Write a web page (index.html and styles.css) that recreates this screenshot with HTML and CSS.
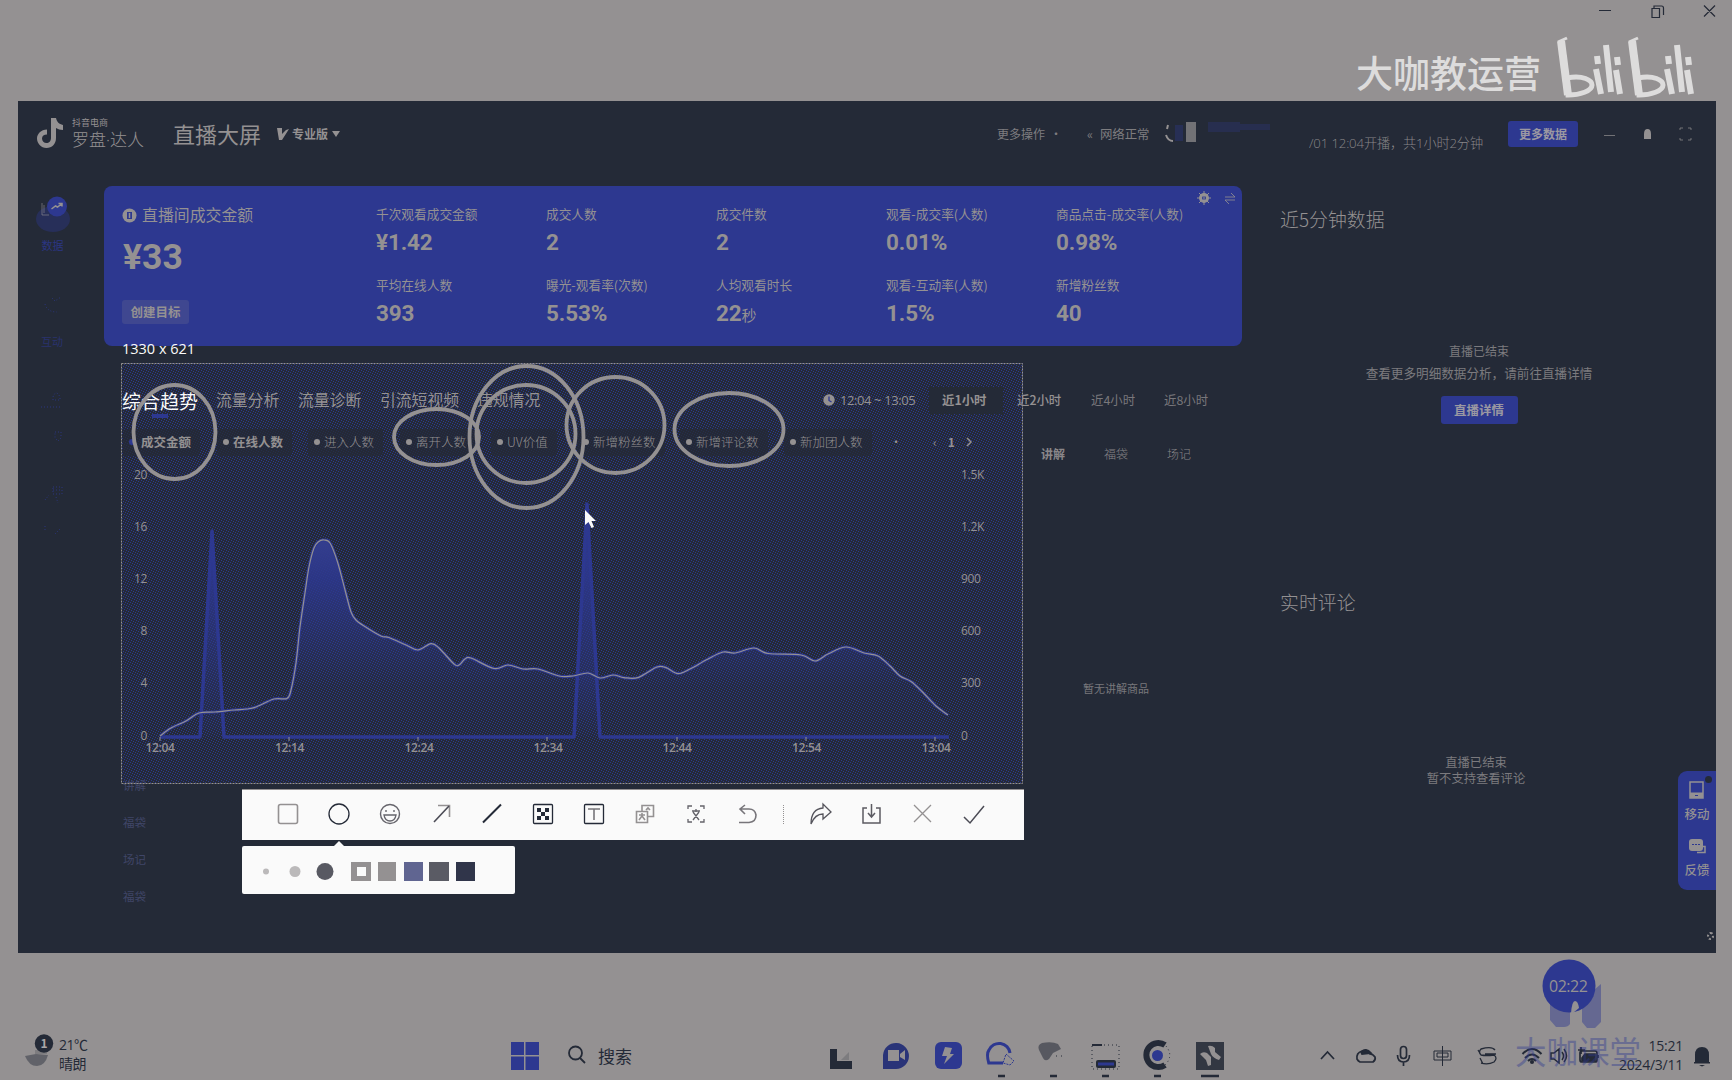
FILE: index.html
```html
<!DOCTYPE html>
<html lang="zh-CN">
<head>
<meta charset="utf-8">
<title>直播大屏</title>
<link rel="stylesheet" href="styles.css">
</head>
<body>
<div class="desktop">
  <header class="titlebar">
    <svg class="winctl" width="118" height="14" viewBox="0 0 118 14" fill="none" stroke="#242a37" stroke-width="1.2">
      <path d="M0 6.500h12M53 4.500h7.500v9H53zM55 4.500V2h7.500a2 2 0 0 1 2 2v7M105 1.500l11 11M116 1.500l-11 11"/>
    </svg>
    <div class="brandmark">
      <span>大咖教运营</span>
      <svg width="141" height="62" viewBox="0 0 141 62" fill="none" stroke="#dddcdc">
        <g id="bili">
          <path d="M5 4l7 54" stroke-width="8"/><path d="M2 5L11 1" stroke-width="3"/>
          <path d="M11 41c16-3 25 2 25 7 0 6-12 10-24 10z" stroke-width="5"/>
          <path d="M40 32l5 25M50 8l5 47M60 33l4 24" stroke-width="6"/>
          <path d="M41 19l1 8M61 20l1 8" stroke-width="6"/>
        </g>
        <use href="#bili" x="71"/>
      </svg>
    </div>
  </header>

  <section class="window">
    <div class="topbar">
      <svg class="note" width="26" height="30" viewBox="0 0 26 30"><path d="M14 0h5c1 4 3 6 7 7v5c-3 0-5-1-7-2v10c0 6-4 10-9.500 10S0 25 0 20.500 4 11.500 10 11.500v5c-3 0-5 1.500-5 4s2 4.500 4.500 4.500S14 23 14 20z" fill="#949192"/></svg>
      <div class="product"><small>抖音电商</small><b>罗盘<i>·</i>达人</b></div>
      <h1>直播大屏</h1>
      <div class="edition"><svg width="12" height="12" viewBox="0 0 12 12" fill="#949192"><path d="M0 0h5v6l4-4 3-1-7 11H2z"/></svg><span>专业版</span><svg width="8" height="6" viewBox="0 0 8 6" fill="#949192"><path d="M0 0h8L4 6z"/></svg></div>
      <div class="more">更多操作<i>·</i></div>
      <div class="net"><i>«</i>网络正常</div>
      <svg class="avatar" width="108" height="22" viewBox="0 0 108 22"><path d="M3 4l-1 4M1 14q2 6 7 6" stroke="#949192" stroke-width="2" fill="none"/><path d="M10 4h8v16h-8z" fill="#2d3890" opacity=".35"/><path d="M21 1h10v20H21z" fill="#949192" opacity=".7"/><path d="M43 1h32v10H43zM75 3h30v6H75z" fill="#2d3890" opacity=".28"/></svg>
      <div class="session">/01 12:04开播，共1小时2分钟</div>
      <div class="btn btn-data">更多数据</div>
      <svg class="topicons" width="90" height="16" viewBox="0 0 90 16" fill="none" stroke="#949192"><path d="M0 9.500h11" opacity=".7"/><path d="M40 13V8q0-5 3.500-5T47 8v5z" fill="#949192" stroke="none"/><path d="M76 4V2h3M84 2h3v2M76 12v2h3M84 14h3v-2" opacity=".7"/></svg>
    </div>

    <div class="workspace">
      <nav class="rail">
        <svg width="86" height="360" viewBox="18 186 86 360" fill="none">
          <ellipse cx="53" cy="219" rx="17" ry="13" fill="#2d3890" opacity=".38"/>
          <path d="M42 203v12h7M44 205v8" stroke="#949192" opacity=".6"/>
          <circle cx="57" cy="206.500" r="10" fill="#2d3890"/>
          <path d="M51.500 209l4-3 2 1 4-3M58.500 203.500h3.500v3" stroke="#949192" stroke-width="1.500"/>
          <g fill="#2d3890" font-size="11"><text x="41.500" y="250" opacity=".85">数据</text><text x="41" y="346" opacity=".6">互动</text></g>
          <g stroke="#2d3890" opacity=".8" stroke-dasharray="1 2"><path d="M52 298l3 3 6-4M45 304q2 8 12 8M53 400v-3q3-8 7 0v3zM41 407h20M55 432h6v6l-3 3-3-3zM53 487h9v7h-9zM53 490h9M45 500l4-5M56 497l2 6M45 526v4M60 529l-5 5"/></g>
        </svg>
      </nav>

      <main>
        <section class="kpi">
          <div class="gmv">
            <div class="gmv-title"><svg width="15" height="15" viewBox="0 0 15 15"><circle cx="7.500" cy="7.500" r="7" fill="#949192"/><path d="M5 4h5v7H5z" fill="#2d3890"/><path d="M7.500 5v5" stroke="#949192" stroke-width="1.500"/></svg>直播间成交金额</div>
            <div class="gmv-value">¥33</div>
            <div class="goal">创建目标</div>
          </div>
          <dl class="metrics">
            <div><dt>千次观看成交金额</dt><dd>¥1.42</dd></div>
            <div><dt>成交人数</dt><dd>2</dd></div>
            <div><dt>成交件数</dt><dd>2</dd></div>
            <div><dt>观看-成交率(人数)</dt><dd>0.01%</dd></div>
            <div><dt>商品点击-成交率(人数)</dt><dd>0.98%</dd></div>
            <div><dt>平均在线人数</dt><dd>393</dd></div>
            <div><dt>曝光-观看率(次数)</dt><dd>5.53%</dd></div>
            <div><dt>人均观看时长</dt><dd>22<small>秒</small></dd></div>
            <div><dt>观看-互动率(人数)</dt><dd>1.5%</dd></div>
            <div><dt>新增粉丝数</dt><dd>40</dd></div>
          </dl>
          <svg class="kpi-tools" width="38" height="16" viewBox="0 0 38 16" fill="none" stroke="#949192"><circle cx="6" cy="7" r="3.500" stroke-width="3"/><path d="M6 0v14M-1 7h3M10 7h3M1 2l2 2M9 10l2 2M11 2l-2 2M3 10l-2 2"/><path d="M27 6h10l-4-4M37 9H27l4 4" opacity=".8"/></svg>
        </section>

        <div class="lower">
          <section class="trend">
            <div class="tabs">
              <b class="on">综合趋势</b><b>流量分析</b><b>流量诊断</b><b>引流短视频</b><b>违规情况</b>
              <span class="clock"><svg width="12" height="12" viewBox="0 0 12 12"><circle cx="6" cy="6" r="5.700" fill="#949192"/><path d="M6 2.500V6.500l2.500 1.500" stroke="#2d3890" fill="none" stroke-width="1.300"/></svg>12:04 ~ 13:05</span>
              <span class="range cur">近1小时</span><span class="range">近2小时</span><span class="range dim">近4小时</span><span class="range dim">近8小时</span>
            </div>
            <div class="legend">
              <span class="pill first">成交金额</span><span class="pill strong">在线人数</span><span class="pill">进入人数</span><span class="pill">离开人数</span><span class="pill">UV价值</span><span class="pill">新增粉丝数</span><span class="pill">新增评论数</span><span class="pill">新加团人数</span>
              <span class="pager"><i>·</i><i>‹</i><b>1</b><svg width="7" height="10" viewBox="0 0 7 10"><path d="M1 1l4 4-4 4" fill="none" stroke="#949192" stroke-width="1.500"/></svg></span>
            </div>
            <svg class="chart" width="901" height="320" viewBox="122 463 901 320">
              <defs>
                <linearGradient id="audience" x1="0" y1="540" x2="0" y2="737" gradientUnits="userSpaceOnUse"><stop offset="0" stop-color="#343e8e"/><stop offset=".2" stop-color="#2d3890" stop-opacity=".85"/><stop offset=".5" stop-color="#2d3890" stop-opacity=".42"/><stop offset=".75" stop-color="#2d3890" stop-opacity=".08"/><stop offset="1" stop-color="#2d3890" stop-opacity="0"/></linearGradient>
                <linearGradient id="sales" x1="0" y1="505" x2="0" y2="737" gradientUnits="userSpaceOnUse"><stop offset="0" stop-color="#2d3890"/><stop offset=".3" stop-color="#2d3890" stop-opacity=".9"/><stop offset="1" stop-color="#2d3890" stop-opacity=".05"/></linearGradient>
              </defs>
              <path id="fill" fill="url(#audience)"/>
              <path d="M160 737H200L212 531L224 737H574L587 504L600 737H949" fill="url(#sales)" stroke="#2d3890" stroke-width="3.500" stroke-linejoin="round"/>
              <path id="halo" fill="none" stroke="#2d3890" stroke-width="3"/>
              <path id="line" fill="none" stroke="#949192" stroke-width="1.200"/>
              <path d="M160 737v4M289 737v4M418 737v4M547 737v4M677 737v4M806 737v4M935 737v4" stroke="#949192"/>
              <g class="axis" text-anchor="end"><text x="147" y="479">20</text><text x="147" y="531">16</text><text x="147" y="583">12</text><text x="147" y="635">8</text><text x="147" y="687">4</text><text x="147" y="740">0</text></g>
              <g class="axis"><text x="961" y="479">1.5K</text><text x="961" y="531">1.2K</text><text x="961" y="583">900</text><text x="961" y="635">600</text><text x="961" y="687">300</text><text x="961" y="740">0</text></g>
              <g class="axis time" text-anchor="middle"><text x="160" y="752">12:04</text><text x="289.500" y="752">12:14</text><text x="419" y="752">12:24</text><text x="548" y="752">12:34</text><text x="677" y="752">12:44</text><text x="806.500" y="752">12:54</text><text x="936" y="752">13:04</text></g>
            </svg>
          </section>
          <aside class="talk">
            <div class="talk-tabs"><b>讲解</b><span>福袋</span><span>场记</span></div>
            <p>暂无讲解商品</p>
          </aside>
        </div>
        <ul class="events"><li>讲解</li><li>福袋</li><li>场记</li><li>福袋</li></ul>
      </main>

      <aside class="side">
        <h2>近5分钟数据</h2>
        <div class="ended"><p>直播已结束</p><p class="hint">查看更多明细数据分析，请前往直播详情</p><div class="btn btn-detail">直播详情</div></div>
        <h2 class="comments-title">实时评论</h2>
        <div class="muted"><p>直播已结束</p><p>暂不支持查看评论</p></div>
      </aside>
    </div>
  </section>

  <footer class="taskbar">
    <div class="weather">
      <svg width="32" height="36" viewBox="0 0 32 36"><path d="M2 22l11-2 12 1q-3 11-11 11T2 22z" fill="#242a37" opacity=".45"/><path d="M12 16h12v4H12z" fill="#242a37" opacity=".2"/><circle cx="21" cy="9.500" r="9.200" fill="#242a37"/><text x="21" y="14" text-anchor="middle" font-size="12" font-weight="700" fill="#aaa7a8">1</text></svg>
      <div><span>21℃</span><span>晴朗</span></div>
    </div>
    <svg class="start" width="28" height="28" viewBox="0 0 28 28" fill="#2d3890"><path d="M0 0h13v13H0zM14.500 0H28v13H14.500zM0 14.500h13V28H0zM14.500 14.500H28V28H14.500z"/></svg>
    <div class="search"><svg width="18" height="20" viewBox="0 0 18 20" fill="none" stroke="#242a37" stroke-width="1.800"><circle cx="7.500" cy="8" r="6.500"/><path d="M12 13l5 5"/></svg>搜索</div>
    <svg class="apps" width="400" height="40" viewBox="830 1038 400 40">
      <path d="M830 1049h7v12h15v8h-22z" fill="#242a37"/><path d="M841 1060l8-8v8z" fill="#242a37" opacity=".2"/>
      <path d="M883 1069v-14a13 13 0 1 1 13 14z" fill="#2a3478"/><path d="M888 1050h11v11h-11zM900 1054l5-4v10l-5-3z" fill="#949192"/>
      <rect x="935" y="1042" width="27" height="27" rx="6" fill="#2d3890"/><path d="M945 1047l7 1-2 6h4l-10 10 3-8h-5z" fill="#949192"/>
      <path d="M989 1064q-3-10 0-14a11 11 0 0 1 21 3M988 1063h15" fill="none" stroke="#2d3890" stroke-width="3"/><path d="M1006 1054l8 7-4 4-7-2z" fill="none" stroke="#2d3890" stroke-dasharray="2 1"/>
      <path d="M1039 1050q-2-5 3-7 10-2 16 1l3 5-8 4-4 6q-4 3-6-1z" fill="#242a37" opacity=".55"/><path d="M1056 1056h6" stroke="#242a37" stroke-dasharray="1 4"/>
      <path d="M1092 1045h27v24h-27z" fill="none" stroke="#242a37" stroke-dasharray="1 3"/><path d="M1092 1045h10" stroke="#242a37" stroke-width="2"/><rect x="1096" y="1060" width="20" height="8" rx="2" fill="#242a37"/><path d="M1098 1064h16" stroke="#2d3890" stroke-width="3"/>
      <path d="M1165 1045a12 12 0 1 0 0 20" fill="none" stroke="#242a37" stroke-width="6"/><path d="M1166 1046q8 10-1 19" fill="none" stroke="#242a37" stroke-dasharray="1 3"/><circle cx="1157.500" cy="1055.500" r="5.500" fill="#2d3890"/>
      <rect x="1196" y="1042" width="28" height="28" fill="#242a37" opacity=".88"/><path d="M1200 1054q3-3 7-1l4 4v8l-3 1-2-6zM1208 1046q4-1 7 2v4l6 5-2 3q-6-2-8-6z" fill="#949192"/>
      <path d="M998 1076h7M1050 1076h7M1102 1076h7M1154 1076h7M1201 1076h18" stroke="#242a37" stroke-width="2.500"/>
    </svg>
    <svg class="tray" width="282" height="24" viewBox="1320 1044 282 24" fill="none" stroke="#242a37" stroke-width="1.700">
      <path d="M1321 1059l6.500-7 6.500 7"/>
      <path d="M1360 1062h13q3-2 2-5-2-3-5-3-3-5-8-3-6 2-5 8 1 2 3 3z"/><path d="M1361 1052q5-5 10 1l-9 1z" fill="#242a37"/>
      <rect x="1400.500" y="1046.500" width="6" height="12" rx="3"/><path d="M1397.500 1055q0 7 6 7t6-7M1403.500 1062v4"/>
      <path d="M1434 1051h17v9h-17zM1442.500 1046v20M1437 1053h11v4h-11z" stroke-width="1"/>
      <path d="M1495 1050q-3-4-14-1-3 3 0 6 5 1 13 0 4 3 0 7-6 3-13 1M1485 1054h11M1480 1058l3 6M1478 1050l3 5" stroke-width="1.300"/>
      <path d="M1522.500 1054q9.500-10 19 0M1525 1058q7-7 14 0M1528 1061q4-4 8 0" stroke-width="2"/><circle cx="1532" cy="1062" r="1.200" fill="#242a37"/>
      <path d="M1551 1053h3l5-4v14l-5-4h-3zM1562 1052q3 4 0 8M1564 1049q5 7 0 13" stroke-width="1.500"/>
      <rect x="1580" y="1051" width="17" height="11" rx="2"/><path d="M1582 1061v-3l3-4h10v7zM1581 1047v7M1578 1050h7M1598 1055v3" fill="#242a37"/>
    </svg>
    <div class="clocktime"><span>15:21</span><span>2024/3/11</span></div>
    <svg class="bell" width="16" height="20" viewBox="0 0 16 20" fill="#242a37"><path d="M1 16V8q0-8 7-8t7 8v8zM0 15h16v1.500H0zM5 18h6l-3 1.500z"/></svg>
  </footer>

  <svg class="marks" width="1732" height="1080" viewBox="0 0 1732 1080" fill="none" stroke="#949192" stroke-width="3.800">
    <ellipse cx="174.500" cy="432" rx="41" ry="47"/><ellipse cx="436.500" cy="437" rx="42.500" ry="28"/><ellipse cx="526.500" cy="437" rx="57" ry="71"/><ellipse cx="526" cy="434" rx="49.500" ry="49"/><ellipse cx="615.500" cy="425" rx="49" ry="48"/><ellipse cx="729" cy="429.500" rx="54.500" ry="36.500"/>
    <rect x="121.500" y="363.500" width="901" height="420" stroke-width="1" stroke-dasharray="2 1"/>
    <path d="M585 510v15l3.500-3 3 6 2.500-1-2.500-6h4.500z" fill="#fafafa" stroke="none"/>
  </svg>
  <div class="size-tip">1330 x 621</div>

  <div class="shot-tools">
    <svg width="782" height="51" viewBox="242 789 782 51" fill="none" stroke="#949192" stroke-width="1.600">
      <rect x="278.500" y="804.500" width="19" height="19" rx="2"/>
      <circle cx="339" cy="814" r="10" stroke="#242a37" stroke-width="1.300"/>
      <g stroke="#66656c" stroke-width="1.400"><circle cx="390" cy="814" r="9.500"/><path d="M384 815h12q-1 6-6 6t-6-6zM386 810v2M394 810v2"/></g>
      <path d="M438 805.500h11.500V817"/><path d="M434 822l15-16" stroke="#4b4b55"/>
      <path d="M483 822.500l18-18" stroke="#242a37" stroke-width="2"/>
      <rect x="533.500" y="804.500" width="19" height="19" rx="1" stroke="#242a37" stroke-width="1.300"/><path d="M537 808h4v4h-4zM545 808h4v4h-4zM541 812h4v4h-4zM537 816h4v4h-4zM545 816h4v4h-4z" fill="#242a37" stroke="none"/>
      <rect x="584.500" y="804.500" width="19" height="19" rx="1" stroke="#242a37" stroke-width="1.300"/><path d="M588 809h12M594 809v11" stroke="#77757a"/>
      <path d="M642 811v-5.500h11.500v11H648M636.500 811.500h11v11h-11zM639 815h6M642 813v3l-3 4M642 816l3 4M646 810l2-2 2 2"/>
      <path d="M688 809v-3h4M700 806h4v3M688 819v3h4M700 822h4v-3M692 811h8M696 809v3M693 820l6-8M693 812l6 8" stroke="#64636a" stroke-width="1.300"/>
      <path d="M745 805l-5 4 5 5M740 809h9q6 0 7 6 0 7-7 7.500h-10" stroke="#77757a"/>
      <path d="M783.500 805v19" stroke-dasharray="1 1" stroke-width="1"/>
      <path d="M811 824q0-15 12-16v-4l8 8-8 7v-5q-8 0-12 10z" stroke="#55545c" stroke-width="1.300"/>
      <path d="M867 808h-4v15h17v-15h-4M871.500 804v13M868 813l3.500 4 3.500-4" stroke="#5c5b62" stroke-width="1.500"/>
      <path d="M914 805l17 17M931 805l-17 17" stroke-width="1.300"/>
      <path d="M964 817l6 6 14-17" stroke="#4b4b55" stroke-width="1.500"/>
    </svg>
  </div>
  <div class="shot-palette">
    <svg width="273" height="53" viewBox="242 841 273 53"><path d="M333 847l6-6 6 6z" fill="#fafafa"/><circle cx="266" cy="871.500" r="3" fill="#bbb9ba"/><circle cx="295" cy="871.500" r="5.500" fill="#bbb9ba"/><circle cx="325" cy="871.500" r="8.500" fill="#585962"/><path d="M351 862h20v19h-20z" fill="#949192"/><path d="M357 867h9v9h-9z" fill="#fafafa"/><path d="M378 862h18v19h-18z" fill="#949192"/><path d="M404 862h19v19h-19z" fill="#606591"/><path d="M429 862h20v19h-20z" fill="#5a5b64"/><path d="M456 862h19v19h-19z" fill="#30354a"/></svg>
  </div>

  <div class="float-menu">
    <svg width="20" height="19" viewBox="0 0 20 19"><path d="M3 1h13v16H3z" fill="none" stroke="#949192" stroke-width="1.500"/><path d="M3 11.500h13V17H3z" fill="#949192"/><path d="M8 14.500h3" stroke="#2d3890"/></svg>
    <span>移动</span>
    <svg width="20" height="17" viewBox="0 0 20 17"><rect x="2" y="0" width="14" height="12" rx="3" fill="#949192"/><path d="M5 5.500h8" stroke="#2d3890" stroke-dasharray="2 1"/><path d="M16 7.500h2v6H10" fill="none" stroke="#949192" stroke-width="1.500"/></svg>
    <span>反馈</span>
    <i class="close-dot"></i>
  </div>
  <i class="corner-dot"></i>
  <div class="watermark">大咖课堂</div>
  <div class="mascot"><svg width="60" height="70" viewBox="1542 959 60 70"><path d="M1550 1000h20v24q-2 3-6 3h-8l-6-7zM1582 1000l19-16v38l-6 6h-8l-5-6z" fill="#2d3890" opacity=".45"/><circle cx="1569" cy="986" r="26.500" fill="#2d3890"/><path d="M1571 1013q1-12 4-12t4 7l-6 5z" fill="#949192"/></svg><span>02:22</span></div>
</div>
<script src="chart.js"></script>
</body>
</html>
```
FILE: chart.js
```js
// Online-audience samples, in chart coordinates.
const pts = [[160,736],[171,728],[186,721],[199,713],[215,712],[234,710],[247,709],[256,707],[274,699],[287,698.5],[291,690],[296,663],[300,627],[305,593],[309,567],[314,548],[318.5,541.7],[324,540],[330,543],[337.5,562],[345,590],[351,612],[356,620],[364,626],[381,636],[389,637.5],[406,645],[418,650],[431,643.7],[439,648],[454,664],[459,665],[465,659],[471,658],[494,668.5],[508,665],[523,669],[538,669],[559,676],[573,676],[588,673],[600,678],[613,675],[624,677.6],[638,677.6],[657,667],[666,667.6],[678,673.6],[690,669],[707,659.5],[723,652],[735,653],[754,648],[768,653.5],[801,655],[815,661],[828,654],[846,647],[864,653],[878,656],[890,666],[900,676],[911,681.5],[922,691.5],[936,706],[948,715]];
let d = `M${pts[0]}`;
for (let i = 0; i < pts.length - 1; i++) {
  const p = pts[Math.max(i - 1, 0)], a = pts[i], b = pts[i + 1], n = pts[Math.min(i + 2, pts.length - 1)];
  d += `C${a[0] + (b[0] - p[0]) / 6},${a[1] + (b[1] - p[1]) / 6} ${b[0] - (n[0] - a[0]) / 6},${b[1] - (n[1] - a[1]) / 6} ${b[0]},${b[1]}`;
}
document.getElementById('line').setAttribute('d', d);
document.getElementById('halo').setAttribute('d', d);
document.getElementById('fill').setAttribute('d', d + 'V737H160Z');
```
FILE: styles.css
```css
:root {
  --gray: #949192;
  --ink: #242a37;
  --blue: #2d3890;
  --cjk: "Noto Sans CJK SC", sans-serif;
}
* { box-sizing: border-box; margin: 0; padding: 0; }
body { background: var(--gray); font: 12px/1 var(--cjk); color: var(--gray); overflow: hidden; }
i { font-style: normal; }
svg { display: block; flex: none; overflow: visible; }
.desktop { position: relative; width: 1732px; height: 1080px; display: flex; flex-direction: column; white-space: nowrap; }

.titlebar { height: 101px; display: flex; flex-direction: column; align-items: flex-end; padding: 4px 15px 0 0; }
.brandmark { display: flex; align-items: center; gap: 15px; margin: 19px 20px 0 0; color: #dddcdc; font-size: 37px; font-weight: 500; }
.brandmark span { padding-top: 8px; }

.window { width: 1698px; height: 852px; margin-left: 18px; background: var(--ink); }
.topbar { height: 85px; display: flex; align-items: flex-start; padding-left: 19px; }
.note { margin-top: 17px; width: 26px; }
.product { margin: 16px 0 0 9px; width: 101px; display: flex; flex-direction: column; }
.product small { font-size: 9px; line-height: 11px; }
.product b { font-size: 17px; font-weight: 300; line-height: 20px; margin-top: 1px; }
.product i { font-family: "Open Sans", sans-serif; }
.topbar h1 { font-size: 22px; font-weight: 400; line-height: 34px; margin-top: 15px; width: 104px; }
.edition { display: flex; align-items: center; gap: 4px; height: 34px; margin-top: 16px; width: 720px; font-weight: 700; }
.edition span { margin-left: -1px; }
.more, .net { line-height: 34px; margin-top: 16px; opacity: .8; }
.more { width: 90px; }
.more i { margin-left: 5px; }
.net { width: 78px; font-size: 12.400px; }
.net i { margin-right: 7px; }
.avatar { margin-top: 20px; width: 108px; }
.session { font: 300 13.200px/20px "Open Sans", var(--cjk); margin: 32px 0 0 36px; width: 199px; letter-spacing: -.15px; opacity: .9; }
.btn { background: var(--blue); border-radius: 3px; display: flex; align-items: center; justify-content: center; font-weight: 700; color: #9b98a2; }
.btn-data { width: 70px; height: 26px; margin-top: 20px; }
.topicons { margin: 25px 0 0 26px; }

.workspace { display: flex; }
.rail { width: 86px; }
main { width: 1138px; }
.kpi { position: relative; height: 160px; background: var(--blue); border-radius: 8px; display: flex; }
.gmv { width: 272px; padding: 19px 0 0 18px; }
.gmv-title { display: flex; align-items: center; gap: 5px; font-size: 15.900px; line-height: 20px; }
.gmv-value { font: 700 35.500px/40px Roboto, sans-serif; margin: 12px 0 0 1px; }
.goal { width: 67px; height: 24px; margin-top: 23px; display: flex; align-items: center; justify-content: center; font-weight: 700; font-size: 12.500px; border-radius: 3px; background: rgba(148, 145, 146, .18); }
.metrics { display: grid; grid-template-columns: repeat(5, 170px); grid-template-rows: 71px 71px; padding-top: 18px; }
.metrics dt { font-size: 12.700px; line-height: 20px; }
.metrics dd { font: 700 22.500px/26px Roboto, sans-serif; margin-top: 5px; letter-spacing: -.15px; }
.metrics small { font: 400 15px/20px var(--cjk); }
.kpi-tools { position: absolute; right: 6px; top: 5px; }

.lower { display: flex; padding: 17px 0 0 18px; }
.trend {
  width: 901px; height: 420px; padding-top: 21px;
  background: conic-gradient(from 0deg at 1px 1px, transparent 270deg, var(--blue) 0) 0 0 / 5px 5px,
    conic-gradient(from 0deg at 1px 1px, transparent 270deg, var(--blue) 0) 2px 1px / 5px 5px,
    conic-gradient(from 0deg at 1px 1px, transparent 270deg, var(--blue) 0) 4px 2px / 5px 5px,
    conic-gradient(from 0deg at 1px 1px, transparent 270deg, var(--blue) 0) 1px 3px / 5px 5px,
    conic-gradient(from 0deg at 1px 1px, transparent 270deg, var(--blue) 0) 3px 4px / 5px 5px, var(--ink);
}
.tabs { display: grid; grid-template-columns: 94px 82px 82px 97px 346px 106px 74px 88px 73px 60px; align-items: center; height: 32px; }
.tabs b { font-size: 15.800px; font-weight: 400; }
.tabs .on { color: #fafafa; font-size: 19px; position: relative; }
.tabs .on::after { content: ""; position: absolute; left: 30px; bottom: -8px; width: 16px; height: 4px; background: var(--blue); }
.clock { display: flex; align-items: center; gap: 5px; font: 13px/16px "Open Sans", sans-serif; letter-spacing: -.4px; }
.range { padding-left: 14px; font-size: 12.400px; }
.cur { background: var(--ink); line-height: 27px; font-weight: 700; padding-left: 13px; }
.dim { opacity: .75; padding-left: 0; }
.range:nth-child(8) { font-weight: 500; }
.legend { display: grid; grid-template-columns: 94px 91px 92px 91px 86px 103px 104px 106px 110px; padding-left: 1px; margin-top: 12px; height: 28px; align-items: center; }
.pill { justify-self: start; display: flex; align-items: center; gap: 4px; height: 27px; padding: 0 9px 0 6px; border-radius: 4px; background: rgba(36, 42, 55, .75); font-size: 12.500px; font-weight: 300; }
.pill::before { content: ""; width: 6px; height: 6px; border-radius: 50%; background: var(--gray); }
.first, .strong { font-weight: 700; }
.first { gap: 6px; }
.first::before { background: var(--blue); }
.pager { display: flex; align-items: center; gap: 11px; }
.pager i + i { margin-left: 20px; }
.chart { margin-top: 7px; }
.axis { font: 500 12px "Open Sans", sans-serif; fill: var(--gray); letter-spacing: -.3px; }
.time { font-weight: 600; }

.talk { margin-left: 18px; }
.talk-tabs { display: flex; gap: 39px; padding-top: 81px; line-height: 20px; opacity: .9; }
.talk-tabs span { font-weight: 300; }
.talk p { margin: 214px 0 0 42px; font-size: 11px; line-height: 20px; opacity: .75; }
.events { list-style: none; margin: -16px 0 0 19px; line-height: 37px; color: #4a5079; font-size: 11.500px; opacity: .75; }
.side { width: 400px; margin-left: 38px; }
.side h2 { font-size: 18.900px; font-weight: 300; line-height: 28px; margin-top: 19px; }
.side p { opacity: .78; }
.ended { text-align: center; padding-top: 108px; width: 398px; }
.ended p { line-height: 20px; }
.ended .hint { margin-top: 2px; font-size: 12.600px; }
.btn-detail { width: 77px; height: 28px; margin: 13px auto 0; font-weight: 700; font-size: 12.500px; }
.side .comments-title { margin-top: 164px; }
.muted { text-align: center; width: 392px; padding-top: 138px; line-height: 16px; font-size: 12.300px; }

.taskbar { flex: 1; display: flex; align-items: flex-start; padding: 81px 0 0 23px; color: var(--ink); }
.weather { display: flex; width: 488px; gap: 4px; }
.weather div { display: flex; flex-direction: column; font: 14px/19px "Open Sans", var(--cjk); padding-top: 1px; letter-spacing: -.5px; }
.start { margin-top: 8px; }
.search { display: flex; gap: 12px; margin: 11px 0 0 29px; width: 262px; font-size: 17px; line-height: 22px; }
.apps { margin-top: 4px; }
.tray { margin: 10px 0 0 90px; }
.clocktime { width: 81px; margin-top: 2px; text-align: right; font: 14px/19px "Open Sans", sans-serif; letter-spacing: -.25px; display: flex; flex-direction: column; }
.bell { margin: 13px 0 0 11px; }

.marks { position: absolute; left: 0; top: 0; }
.size-tip { position: absolute; left: 122px; top: 339px; color: #fafafa; font: 14.500px/20px "Open Sans", sans-serif; }
.shot-tools { position: absolute; left: 242px; top: 789px; background: #fafafa; border-top: 1px solid var(--gray); height: 51px; }
.shot-tools svg { margin-top: -1px; }
.shot-palette { position: absolute; left: 242px; top: 846px; width: 273px; height: 48px; border-radius: 2px; background: #fafafa; }
.shot-palette svg { margin-top: -5px; }
.float-menu { position: absolute; left: 1678px; top: 771px; width: 38px; height: 119px; border-radius: 9px 0 0 9px; background: var(--blue); display: flex; flex-direction: column; align-items: center; padding-top: 10px; font-size: 12.500px; font-weight: 500; }
.float-menu span { line-height: 27px; }
.float-menu span + svg { margin-top: 12px; }
.close-dot { position: absolute; right: 4px; top: 5px; width: 7px; height: 7px; border-radius: 50%; background: var(--ink); }
.corner-dot { position: absolute; left: 1707px; top: 932px; width: 7px; height: 8px; border-radius: 50%; border: 2px dotted var(--gray); }
.watermark { position: absolute; left: 1515px; top: 1033px; font-size: 31.500px; line-height: 34px; color: var(--blue); opacity: .4; }
.mascot { position: absolute; left: 1542px; top: 959px; }
.mascot span { position: absolute; left: 7px; top: 17px; font: 16px/20px "Open Sans", sans-serif; letter-spacing: -.5px; }
```
